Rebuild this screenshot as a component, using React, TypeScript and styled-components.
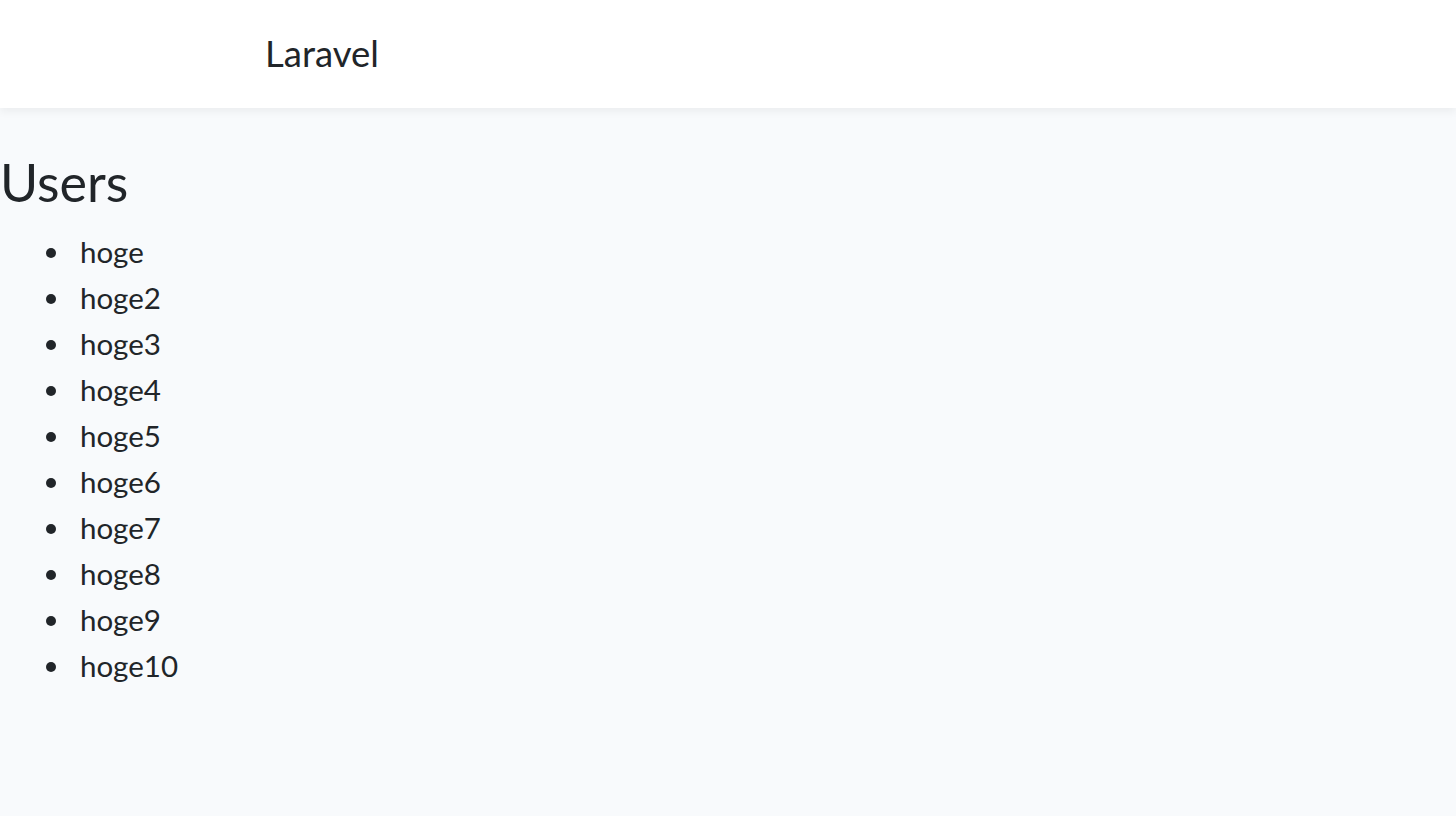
import React from 'react'
import styled, { createGlobalStyle } from 'styled-components'

const users = ['hoge', 'hoge2', 'hoge3', 'hoge4', 'hoge5', 'hoge6', 'hoge7', 'hoge8', 'hoge9', 'hoge10']

const GlobalStyle = createGlobalStyle`
    html, body {
        margin: 0;
        padding: 0;
        background: #f8fafc;
        color: #212529;
        font-family: Lato, "Open Sans", sans-serif;
    }
`

const Navbar = styled.nav`
    height: 108px;
    background: #fff;
    box-shadow: 0 4px 8px rgba(0, 0, 0, 0.05);
    display: flex;
    align-items: center;
    padding-left: 265px;
    position: relative;
`

const Brand = styled.a`
    font-size: 36.5px;
    color: #212529;
    text-decoration: none;
    margin-top: -3px;
`

const Main = styled.main`
    padding-top: 43px;
`

const Title = styled.h1`
    margin: 0;
    font-size: 52px;
    font-weight: 400;
    line-height: 1.2;
`

const UserList = styled.ul`
    margin: 16px 0 0;
    padding-left: 80px;
    list-style: none;
    font-size: 29.5px;
    line-height: 46px;
`

const UserItem = styled.li`
    position: relative;
    &::before {
        content: '';
        position: absolute;
        left: -34px;
        top: 19px;
        width: 10px;
        height: 10px;
        border-radius: 50%;
        background: #212529;
    }
`

export default function App() {
    return (
        <>
            <GlobalStyle />
            <Navbar>
                <Brand href="#">Laravel</Brand>
            </Navbar>
            <Main>
                <Title>Users</Title>
                <UserList>
                    {users.map(u => <UserItem key={u}>{u}</UserItem>)}
                </UserList>
            </Main>
        </>
    )
}
